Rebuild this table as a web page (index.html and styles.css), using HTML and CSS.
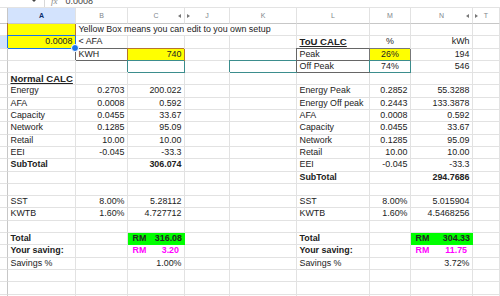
FILE: index.html
```html
<!DOCTYPE html>
<html>
<head>
<meta charset="utf-8">
<link rel="stylesheet" href="styles.css">
</head>
<body>
<div class="fbar">
  <span class="dd"></span>
  <span class="sep"></span>
  <span class="fx">fx</span>
  <span class="val">0.0008</span>
</div>
<div class="sheet">
  <div class="corner"></div><div class="ch on">A</div><div class="ch">B</div><div class="ch ra">C</div><div class="ch la">J</div><div class="ch">K</div><div class="ch">L</div><div class="ch">M</div><div class="ch ra">N</div><div class="ch la">T</div>

  <div class="rh"></div><div class="y bo"></div><div class="span4">Yellow Box means you can edit to you own setup</div><div></div><div></div><div></div><div></div>

  <div class="rh on"></div><div class="y sel r">0.0008</div><div>&lt; AFA</div><div></div><div></div><div></div><div class="hd">ToU CALC</div><div class="m">%</div><div class="r">kWh</div><div></div>

  <div class="rh"></div><div></div><div class="bd">KWH</div><div class="y bo r">740</div><div></div><div></div><div class="bd">Peak</div><div class="y bg m">26%</div><div class="r">194</div><div></div>

  <div class="rh"></div><div></div><div></div><div class="bt"></div><div></div><div class="bt"></div><div class="bd">Off Peak</div><div class="bt m">74%</div><div class="r">546</div><div></div>

  <div class="rh"></div><div class="hd">Normal CALC</div><div></div><div></div><div></div><div></div><div></div><div></div><div></div><div></div>

  <div class="rh"></div><div>Energy</div><div class="r">0.2703</div><div class="r">200.022</div><div></div><div></div><div>Energy Peak</div><div class="r">0.2852</div><div class="r">55.3288</div><div></div>

  <div class="rh"></div><div>AFA</div><div class="r">0.0008</div><div class="r">0.592</div><div></div><div></div><div>Energy Off peak</div><div class="r">0.2443</div><div class="r">133.3878</div><div></div>

  <div class="rh"></div><div>Capacity</div><div class="r">0.0455</div><div class="r">33.67</div><div></div><div></div><div>AFA</div><div class="r">0.0008</div><div class="r">0.592</div><div></div>

  <div class="rh"></div><div>Network</div><div class="r">0.1285</div><div class="r">95.09</div><div></div><div></div><div>Capacity</div><div class="r">0.0455</div><div class="r">33.67</div><div></div>

  <div class="rh"></div><div>Retail</div><div class="r">10.00</div><div class="r">10.00</div><div></div><div></div><div>Network</div><div class="r">0.1285</div><div class="r">95.09</div><div></div>

  <div class="rh"></div><div>EEI</div><div class="r">-0.045</div><div class="r">-33.3</div><div></div><div></div><div>Retail</div><div class="r">10.00</div><div class="r">10.00</div><div></div>

  <div class="rh"></div><div class="b">SubTotal</div><div></div><div class="r b">306.074</div><div></div><div></div><div>EEI</div><div class="r">-0.045</div><div class="r">-33.3</div><div></div>

  <div class="rh"></div><div></div><div></div><div></div><div></div><div></div><div class="b">SubTotal</div><div></div><div class="r b">294.7686</div><div></div>

  <div class="rh"></div><div></div><div></div><div></div><div></div><div></div><div></div><div></div><div></div><div></div>

  <div class="rh"></div><div>SST</div><div class="r">8.00%</div><div class="r">5.28112</div><div></div><div></div><div>SST</div><div class="r">8.00%</div><div class="r">5.015904</div><div></div>

  <div class="rh"></div><div>KWTB</div><div class="r">1.60%</div><div class="r">4.727712</div><div></div><div></div><div>KWTB</div><div class="r">1.60%</div><div class="r">4.5468256</div><div></div>

  <div class="rh"></div><div></div><div></div><div></div><div></div><div></div><div></div><div></div><div></div><div></div>

  <div class="rh"></div><div class="b">Total</div><div></div><div class="g acc b"><span>RM</span><span>316.08</span></div><div></div><div></div><div class="b">Total</div><div></div><div class="g acc b"><span>RM</span><span>304.33</span></div><div></div>

  <div class="rh"></div><div class="b">Your saving:</div><div></div><div class="pk acc b"><span>RM</span><span>3.20</span></div><div></div><div></div><div class="b">Your saving:</div><div></div><div class="pk acc b"><span>RM</span><span>11.75</span></div><div></div>

  <div class="rh"></div><div>Savings %</div><div></div><div class="r">1.00%</div><div></div><div></div><div>Savings %</div><div></div><div class="r">3.72%</div><div></div>

  <div class="rh"></div><div></div><div></div><div></div><div></div><div></div><div></div><div></div><div></div><div></div>
  <div class="rh"></div><div></div><div></div><div></div><div></div><div></div><div></div><div></div><div></div><div></div>
  <div class="rh"></div><div></div><div></div><div></div><div></div><div></div><div></div><div></div><div></div><div></div>
</div>
</body>
</html>
```
FILE: styles.css
```css
* { box-sizing: border-box; margin: 0; padding: 0; }
html, body { width: 500px; height: 296px; overflow: hidden; background: #fff; }
body { font-family: "Liberation Sans", Arial, sans-serif; color: #222; }

.fbar {
  height: 8px;
  border-bottom: 1px solid #e3e3e3;
  display: flex;
  align-items: flex-start;
  overflow: hidden;
  font-size: 9px;
  line-height: 9px;
}
.fbar .dd {
  margin-left: 31px;
  margin-top: -1px;
  width: 0; height: 0;
  border-left: 3px solid transparent;
  border-right: 3px solid transparent;
  border-top: 3px solid #444;
}
.fbar .sep { margin-left: 7px; width: 1px; height: 7px; background: #d8d8d8; }
.fbar .fx { margin-left: 6px; margin-top: -3px; font-family: "Liberation Serif", serif; font-style: italic; color: #888; }
.fbar .val { margin-left: 8px; margin-top: -3px; color: #444; }

.sheet {
  display: grid;
  grid-template-columns: 8px 68px 52px 57px 45px 67px 73px 41px 62px 27px;
  grid-template-rows: 16px;
  grid-auto-rows: 12.3px;
  font-size: 8.9px;
}
.sheet > div {
  border-right: 1px solid #e2e2e2;
  border-bottom: 1px solid #e2e2e2;
  padding: 0 2.5px;
  line-height: 11.5px;
  white-space: nowrap;
  overflow: hidden;
}
.sheet > .corner { padding: 0; border-right-color: #c7c7c7; border-bottom-color: #c7c7c7; }
.sheet > .ch {
  font-size: 7px;
  line-height: 15px;
  color: #80868b;
  text-align: center;
  border-bottom-color: #c7c7c7;
  position: relative;
}
.sheet > .ch.on { background: #d3e3fd; color: #0b2c6b; font-weight: bold; }
.ch.ra::after, .ch.la::before {
  content: "";
  position: absolute;
  top: 6px;
  width: 0; height: 0;
  border-top: 2px solid transparent;
  border-bottom: 2px solid transparent;
}
.ch.ra::after { right: 3px; border-right: 3px solid #777; }
.ch.la::before { left: 2px; border-left: 3px solid #777; }

.sheet > .rh { padding: 0; border-right-color: #c7c7c7; }
.sheet > .rh.on { background: #d3e3fd; }

.sheet > .span4 { grid-column: span 4; }

.r { text-align: right; }
.m { text-align: center; }
.b { font-weight: bold; }
.sheet > .hd { font-weight: bold; text-decoration: underline; font-size: 9.6px; }

.y { background: #ffff00; }
.sheet > .g { background: #00ff00; border-right-color: #00ff00; border-bottom-color: #00ff00; }
.pk { color: #ff00ff; }
.sheet > .acc { display: flex; justify-content: space-between; padding-left: 4.5px; padding-right: 2px; }
.sheet > .pk.acc { padding-right: 5px; }

.sheet > .bd { border-right-color: #666; border-bottom-color: #666; box-shadow: -1px -1px 0 0 #666; }
.sheet > .bo { border-right-color: #b5742e; border-bottom-color: #b5742e; box-shadow: -1px -1px 0 0 #b5742e; }
.sheet > .bg { border-right-color: #777; border-bottom-color: #777; box-shadow: -1px -1px 0 0 #777; }
.sheet > .bt { border-right-color: #3b8d8d; border-bottom-color: #3b8d8d; box-shadow: -1px -1px 0 0 #3b8d8d; }

.sheet > .sel {
  position: relative;
  z-index: 1;
  overflow: visible;
  border-right-color: #1a73e8;
  border-bottom-color: #1a73e8;
  box-shadow: -1px -1px 0 0 #1a73e8;
}
.sel::after {
  content: "";
  position: absolute;
  right: -4px;
  bottom: -4px;
  width: 6px;
  height: 6px;
  border-radius: 50%;
  background: #1a73e8;
  border: 1px solid #fff;
}
```
